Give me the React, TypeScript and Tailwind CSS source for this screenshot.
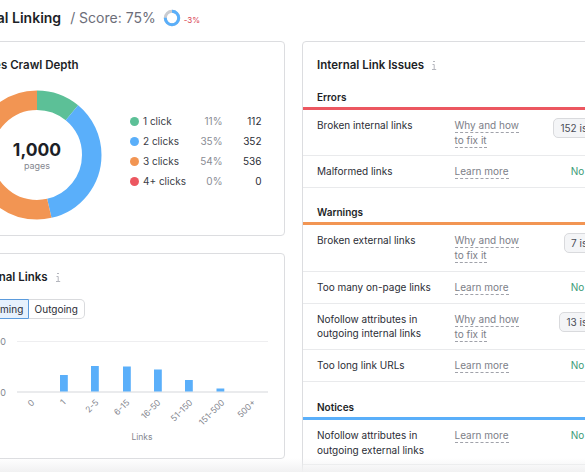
const font = { fontFamily: "Inter, 'Noto Sans', sans-serif" };

function InfoIcon() {
  return (
    <svg width="6" height="11" viewBox="0 0 6 11" className="ml-[7px]" fill="none" stroke="#b4b6bd" strokeWidth="1">
      <path d="M2 1.5h2M1.5 4.5H3.2V9.5M1 9.5h4.2" />
    </svg>
  );
}

function Donut() {
  const r = 54.75;
  const c = 2 * Math.PI * r;
  const segs = [
    { v: 0.11, o: 0, col: "#5cc097" },
    { v: 0.353, o: 0.11, col: "#5aaffa" },
    { v: 0.537, o: 0.463, col: "#f29553" },
  ];
  return (
    <div className="relative h-[130px] w-[130px] shrink-0">
      <svg width="130" height="130" viewBox="0 0 130 130">
        {segs.map((s) => (
          <circle
            key={s.col}
            cx="65"
            cy="65"
            r={r}
            fill="none"
            stroke={s.col}
            strokeWidth="19.5"
            strokeDasharray={`${s.v * c} ${c}`}
            strokeDashoffset={-s.o * c}
            transform="rotate(-90 65 65)"
          />
        ))}
      </svg>
      <div className="absolute inset-0 flex flex-col items-center justify-center">
        <span className="text-[17.5px] font-bold leading-[21px] text-[#1d1f27]">1,000</span>
        <span className="text-[9px] leading-[11px] text-[#85878f]">pages</span>
      </div>
    </div>
  );
}

const legend = [
  ["#5cc097", "1 click", "11%", "112"],
  ["#5aaffa", "2 clicks", "35%", "352"],
  ["#f29553", "3 clicks", "54%", "536"],
  ["#ec5760", "4+ clicks", "0%", "0"],
];

function Legend() {
  return (
    <div className="mb-[8px] ml-[27.5px] flex w-[132px] flex-col text-[10px] text-[#3b3d47]">
      {legend.map(([col, label, pct, n]) => (
        <div key={label} className="flex h-5 items-center">
          <span className="h-[9px] w-[9px] rounded-full" style={{ background: col }} />
          <span className="ml-[4.5px] w-[45.5px] whitespace-nowrap">{label}</span>
          <span className="w-[34px] text-right text-[#8a8c94]">{pct}</span>
          <span className="w-[39px] text-right text-[#2b2d36]">{n}</span>
        </div>
      ))}
    </div>
  );
}

function Chart() {
  const bars = [
    [59, 375],
    [90, 366],
    [122, 366.5],
    [153, 369.5],
    [184, 380],
    [215.5, 388.5],
  ];
  const labels: [string, number][] = [
    ["0", 32],
    ["1", 63],
    ["2-5", 96],
    ["6-15", 127],
    ["16-50", 158],
    ["51-150", 190],
    ["151-500", 222],
    ["500+", 253],
  ];
  return (
    <svg width="340" height="110" viewBox="-56 335 340 110" className="mt-[16px] block">
      <path d="M16 341.5H267" stroke="#eeeef0" strokeWidth="1" />
      <path d="M16 392H267" stroke="#e3e4e7" strokeWidth="1.5" />
      <text x="5" y="345" textAnchor="end" fontSize="9" fill="#85878f">100</text>
      <text x="5" y="395.5" textAnchor="end" fontSize="9" fill="#85878f">50</text>
      {bars.map(([x, y]) => (
        <rect key={x} x={x} y={y} width="7.8" height={391.5 - y} fill="#5aaffa" />
      ))}
      {labels.map(([t, x]) => (
        <text key={t} x={x} y="404" textAnchor="end" fontSize="8.5" fill="#85878f" transform={`rotate(-45 ${x} 401)`}>
          {t}
        </text>
      ))}
      <text x="141" y="440" textAnchor="middle" fontSize="8.5" fill="#85878f">Links</text>
    </svg>
  );
}

function LinkText({ t, two }: { t: string; two?: boolean }) {
  const cls = "border-b border-dashed border-[#a0a2aa] text-[#7c7e87]";
  if (two) {
    return (
      <div className="mt-[1px] flex flex-col items-start">
        <span className={`${cls} leading-[13px]`}>Why and how</span>
        <span className={`${cls} mt-[1px] leading-[13px]`}>to fix it</span>
      </div>
    );
  }
  return <span className={`${cls} mt-[1px] block w-fit leading-[13px]`}>{t}</span>;
}

function Row({ name, pill, h }: { name: string; pill?: string; h: string }) {
  return (
    <div className={`flex border-b border-[#e9eaec] pl-[14px] pr-[26px] pt-[8px] ${h}`}>
      <div className="w-[137.5px] shrink-0 whitespace-pre-line leading-[14.5px] text-[#2b2d36]">{name}</div>
      <div className="w-[95px] shrink-0">
        <LinkText t="Learn more" two={!!pill} />
      </div>
      <div className="flex flex-1 justify-end">
        {pill ? (
          <span className="h-[20px] rounded-[5px] border border-[#d9dadd] bg-[#f4f5f7] px-[6.5px] leading-[18px] text-[#4b4d57]">
            {pill}
          </span>
        ) : (
          <span className="leading-[14.5px] text-[#3b9b77]">No issues</span>
        )}
      </div>
    </div>
  );
}

function Section({ title, bar, children, mt }: { title: string; bar: string; children: React.ReactNode; mt: string }) {
  return (
    <div className={mt}>
      <div className="pl-[14px] text-[10px] font-semibold leading-[14px] text-[#1d1f27]">{title}</div>
      <div className={`mt-[3px] h-[3px] ${bar}`} />
      {children}
    </div>
  );
}

export default function App() {
  return (
    <div className="relative h-[472px] w-[585px] overflow-hidden bg-white" style={font}>
      <div className="-ml-[56px] w-[700px]">
        <div className="flex h-[41px] items-center pb-[6px] pl-[13px] whitespace-nowrap">
          <span className="text-[14px] font-semibold text-[#1d1f27]">Internal Linking</span>
          <span className="ml-[9px] text-[14px] text-[#6c6e79]">/ Score: 75%</span>
          <svg width="18" height="18" viewBox="0 0 18 18" className="ml-[7px]">
            <circle cx="9" cy="9" r="6.7" fill="none" stroke="#c9cbd0" strokeWidth="3" />
            <circle cx="9" cy="9" r="6.7" fill="none" stroke="#5aaffa" strokeWidth="3" strokeDasharray="31.6 42.1" transform="rotate(-90 9 9)" />
          </svg>
          <span className="ml-[3px] mt-[4px] text-[8px] text-[#d8424f]">-3%</span>
        </div>
        <div className="flex items-start gap-[17px]">
          <div className="flex w-[341px] shrink-0 flex-col gap-[17px]">
            <div className="h-[195px] rounded-[4px] border border-[#dcdde0] pl-[15px] pt-[15px]">
              <div className="pl-[13px] text-[11.5px] font-semibold leading-[16px] text-[#1d1f27]">Pages Crawl Depth</div>
              <div className="mt-[17px] flex items-center pl-[12px]">
                <Donut />
                <Legend />
              </div>
            </div>
            <div className="h-[206px] rounded-[4px] border border-[#dcdde0] pt-[15px]">
              <div className="flex items-center pl-[28px]">
                <span className="text-[11.5px] font-semibold leading-[16px] text-[#1d1f27]">Internal Links</span>
                <InfoIcon />
              </div>
              <div className="ml-[29px] mt-[14px] flex h-5 text-[10px] leading-[18px] text-[#2b2d36]">
                <span className="w-[55px] rounded-l-[5px] border border-[#5b9bdc] bg-[#e6f1fd] text-center">Incoming</span>
                <span className="w-[55.5px] rounded-r-[5px] border border-l-0 border-[#d9dadd] text-center">Outgoing</span>
              </div>
              <Chart />
            </div>
          </div>
          <div className="h-[440px] w-[342px] shrink-0 rounded-t-[4px] border border-[#dcdde0] pt-[15px] text-[10px]">
            <div className="flex items-center pl-[14px]">
              <span className="text-[11.5px] font-semibold leading-[16px] text-[#1d1f27]">Internal Link Issues</span>
              <InfoIcon />
            </div>
            <Section title="Errors" bar="bg-[#ec5760]" mt="mt-[17px]">
              <Row name="Broken internal links" pill="152 issues" h="h-[46px]" />
              <Row name="Malformed links" h="h-[32px]" />
            </Section>
            <Section title="Warnings" bar="bg-[#f29553]" mt="mt-[17px]">
              <Row name="Broken external links" pill="7 issues" h="h-[46.5px]" />
              <Row name="Too many on-page links" h="h-[32px]" />
              <Row name={"Nofollow attributes in\noutgoing internal links"} pill="13 issues" h="h-[46px]" />
              <Row name="Too long link URLs" h="h-[32.5px]" />
            </Section>
            <Section title="Notices" bar="bg-[#5aaffa]" mt="mt-[18px]">
              <Row name={"Nofollow attributes in\noutgoing external links"} h="h-[45px]" />
            </Section>
          </div>
        </div>
      </div>
      <div className="pointer-events-none absolute inset-x-0 bottom-0 h-[14px] bg-gradient-to-b from-white/0 to-[#f1f1f2]" />
    </div>
  );
}
